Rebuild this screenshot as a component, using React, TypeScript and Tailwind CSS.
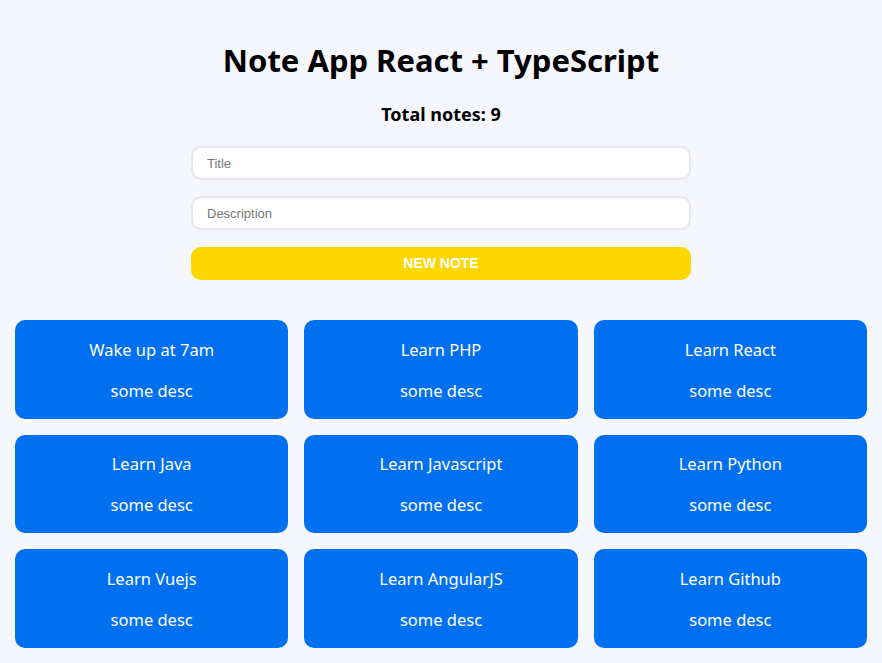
const notes = [
  { title: 'Wake up at 7am', desc: 'some desc' },
  { title: 'Learn PHP', desc: 'some desc' },
  { title: 'Learn React', desc: 'some desc' },
  { title: 'Learn Java', desc: 'some desc' },
  { title: 'Learn Javascript', desc: 'some desc' },
  { title: 'Learn Python', desc: 'some desc' },
  { title: 'Learn Vuejs', desc: 'some desc' },
  { title: 'Learn AngularJS', desc: 'some desc' },
  { title: 'Learn Github', desc: 'some desc' },
];

export default function App() {
  return (
    <div className="min-h-screen bg-[#f6f6fd] px-[15px] pt-10 pb-4 text-black [font-family:'Noto_Sans',sans-serif]">
      <h1 className="h-10 text-center text-[31px] font-bold leading-10">Note App React + TypeScript</h1>
      <p className="mt-[22px] text-center text-lg font-bold leading-6">Total notes: {notes.length}</p>

      <form className="mx-auto mt-5 flex w-[500px] flex-col" onSubmit={(e) => e.preventDefault()}>
        <input
          placeholder="Title"
          className="h-[34px] rounded-[10px] border-2 border-[#e6e6ee] bg-white px-[14px] text-[13px] outline-none placeholder:text-[#777] [font-family:'Liberation_Sans',Arial,sans-serif]"
        />
        <input
          placeholder="Description"
          className="mt-4 h-[34px] rounded-[10px] border-2 border-[#e6e6ee] bg-white px-[14px] text-[13px] outline-none placeholder:text-[#777] [font-family:'Liberation_Sans',Arial,sans-serif]"
        />
        <button className="mt-[17px] h-[33px] rounded-[10px] bg-[#ffd700] text-[14px] font-bold uppercase text-white [font-family:'Liberation_Sans',Arial,sans-serif]">
          New note
        </button>
      </form>

      <div className="mt-10 grid grid-cols-3 gap-4">
        {notes.map((n) => (
          <div key={n.title} className="flex h-[98.5px] flex-col items-center justify-center gap-[17px] rounded-[10px] bg-[#0070f0] pt-[2px] text-white">
            <h3 className="text-[16.5px] leading-6">{n.title}</h3>
            <p className="text-[16.5px] leading-6">{n.desc}</p>
          </div>
        ))}
      </div>
    </div>
  );
}
